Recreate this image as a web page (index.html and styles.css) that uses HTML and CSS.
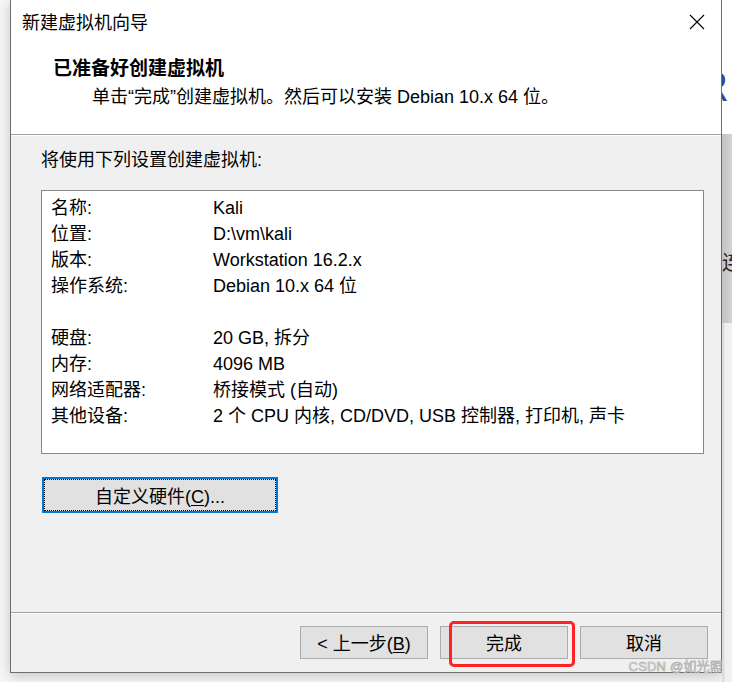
FILE: index.html
```html
<!DOCTYPE html>
<html lang="zh-CN">
<head>
<meta charset="utf-8">
<title>新建虚拟机向导</title>
<link rel="stylesheet" href="styles.css">
</head>
<body>
<div class="desk">
  <div class="gutter"></div>

  <div class="window">
    <div class="titlebar">
      <span class="title">新建虚拟机向导</span>
      <svg class="close" width="16" height="16" viewBox="0 0 16 16" aria-hidden="true">
        <path d="M1 1 L15 15 M15 1 L1 15" stroke="#000" stroke-width="1.1" fill="none"/>
      </svg>
    </div>

    <div class="header">
      <div class="heading">已准备好创建虚拟机</div>
      <div class="subheading">单击“完成”创建虚拟机。然后可以安装 Debian 10.x 64 位。</div>
    </div>

    <div class="content">
      <div class="intro">将使用下列设置创建虚拟机:</div>

      <div class="summary">
        <div class="grid">
          <span>名称:</span><span>Kali</span>
          <span>位置:</span><span>D:\vm\kali</span>
          <span>版本:</span><span>Workstation 16.2.x</span>
          <span>操作系统:</span><span>Debian 10.x 64 位</span>
          <span class="gap"></span>
          <span>硬盘:</span><span>20 GB, 拆分</span>
          <span>内存:</span><span>4096 MB</span>
          <span>网络适配器:</span><span>桥接模式 (自动)</span>
          <span>其他设备:</span><span>2 个 CPU 内核, CD/DVD, USB 控制器, 打印机, 声卡</span>
        </div>
      </div>

      <button class="btn btn-focus">自定义硬件(<u>C</u>)...</button>
    </div>

    <div class="footer">
      <button class="btn btn-wide">&lt; 上一步(<u>B</u>)</button>
      <button class="btn btn-wide">完成</button>
      <button class="btn btn-wide">取消</button>
      <div class="mark"></div>
      <div class="watermark">CSDN @如光照</div>
    </div>
  </div>

  <div class="backapp">
    <div class="ba-top"><span class="ba-r">R</span></div>
    <div class="ba-mid"><span class="ba-lian">连</span></div>
    <div class="ba-low"></div>
  </div>
</div>
</body>
</html>
```

FILE: styles.css
```css
* {
  box-sizing: border-box;
}

html, body {
  margin: 0;
  padding: 0;
}

body {
  background: #f6f6f6;
  font-family: "Liberation Sans", "Noto Sans CJK SC", sans-serif;
  font-size: 18px;
  color: #000;
  overflow: hidden;
}

.desk {
  display: flex;
  width: 732px;
  height: 682px;
  align-items: flex-start;
}

.gutter {
  width: 10px;
  flex: none;
}

/* dialog window */
.window {
  position: relative;
  width: 712px;
  height: 673px;
  flex: none;
  border: 1px solid #6e6e6e;
  border-top: 0;
  background: #f0f0f0;
  box-shadow: 0 3px 12px rgba(0, 0, 0, 0.2);
  display: flex;
  flex-direction: column;
}

.titlebar {
  height: 44px;
  background: #fff;
  display: flex;
  align-items: center;
  justify-content: space-between;
  padding: 0 16px 0 11px;
}

.title {
  line-height: 44px;
  padding-top: 1px;
}

.close {
  display: block;
}

.header {
  height: 91px;
  background: #fff;
  padding: 11px 0 0 42px;
  border-bottom: 1px solid #a0a0a0;
}

.heading {
  font-weight: bold;
  font-size: 19px;
  line-height: 28px;
}

.subheading {
  line-height: 28px;
  padding-left: 39px;
}

.content {
  height: 477px;
  border-top: 1px solid #fff;
  padding: 11px 0 0 30px;
  display: flex;
  flex-direction: column;
  align-items: flex-start;
}

.intro {
  line-height: 26px;
}

.summary {
  margin-top: 17px;
  width: 663px;
  height: 264px;
  background: #fff;
  border: 1px solid #828790;
  padding: 4px 0 0 9px;
}

.grid {
  display: grid;
  grid-template-columns: 162px 1fr;
  line-height: 26px;
  white-space: nowrap;
}

.gap {
  grid-column: 1 / 3;
  height: 26px;
}

.btn {
  font: inherit;
  color: #000;
  background: #e1e1e1;
  border: 1px solid #adadad;
  padding: 0;
  margin: 0;
  position: relative;
}

.btn u {
  text-decoration-thickness: 1px;
  text-underline-offset: 2px;
}

.btn-focus {
  margin-top: 23px;
  margin-left: 1px;
  width: 236px;
  height: 36px;
  border: 2px solid #0078d7;
  line-height: 30px;
  padding-top: 3px;
}

.btn-focus::before {
  content: "";
  position: absolute;
  inset: 0;
  border: 1px dotted #000;
}

.footer {
  position: relative;
  flex: 1;
  border-top: 1px solid #a0a0a0;
  box-shadow: inset 0 1px 0 #fff;
  display: flex;
  justify-content: flex-end;
  align-items: flex-start;
  gap: 12px;
  padding: 13px 13px 0 0;
}

.btn-wide {
  width: 128px;
  height: 33px;
  line-height: 29px;
  padding-top: 3px;
}

/* red highlight drawn around the finish button */
.mark {
  position: absolute;
  left: 438px;
  top: 8px;
  width: 126px;
  height: 46px;
  border: 3px solid #ff2222;
  border-radius: 5px;
  pointer-events: none;
}

.watermark {
  position: absolute;
  right: -2px;
  top: 47px;
  font-size: 13px;
  line-height: 14px;
  color: #ededed;
  -webkit-text-stroke: 0.6px #a8a8a8;
  letter-spacing: 0.2px;
  white-space: nowrap;
}

/* application visible behind the dialog */
.backapp {
  width: 10px;
  height: 682px;
  flex: none;
  display: flex;
  flex-direction: column;
  overflow: hidden;
  position: relative;
  z-index: 1;
}

.ba-top {
  height: 134px;
  background: #fff;
  position: relative;
}

.ba-r {
  position: absolute;
  left: -19px;
  top: 64px;
  font-family: "Open Sans", sans-serif;
  font-size: 40px;
  line-height: 44px;
  color: #2f4a8f;
}

.ba-mid {
  height: 189px;
  background: linear-gradient(to right, #c2c2c2, #d3d3d3);
  position: relative;
}

.ba-lian {
  position: absolute;
  left: 0;
  top: 116px;
  font-family: "Noto Sans CJK SC", sans-serif;
  font-size: 20px;
  line-height: 24px;
  color: #222;
}

.ba-low {
  flex: 1;
  background: linear-gradient(to right, #dcdcdc 0, #dcdcdc 2px, #f0f0f0 3px);
}
```
